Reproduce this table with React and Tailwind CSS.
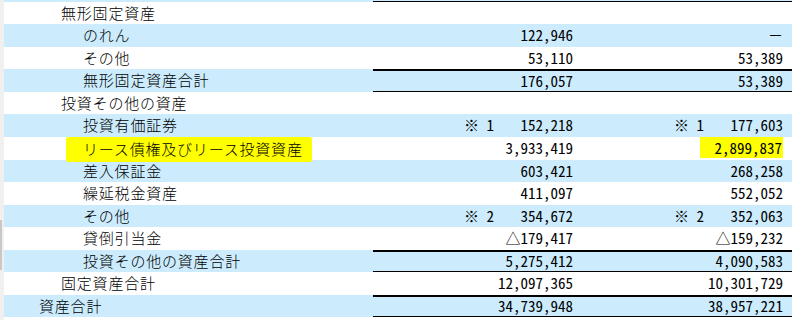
import React from "react";

const rows = [
  { label: "無形固定資産", level: 1, a: "", b: "", h: "h-[22px]" },
  { label: "のれん", level: 2, a: "122,946", b: "－", h: "h-[23px]" },
  { label: "その他", level: 2, a: "53,110", b: "53,389", h: "h-[22px]" },
  { label: "無形固定資産合計", level: 2, a: "176,057", b: "53,389", h: "h-[23px]", total: true },
  { label: "投資その他の資産", level: 1, a: "", b: "", h: "h-[22px]" },
  { label: "投資有価証券", level: 2, a: "152,218", b: "177,603", note: "※ 1", h: "h-[23px]" },
  { label: "リース債権及びリース投資資産", level: 2, a: "3,933,419", b: "2,899,837", h: "h-[23px]", mark: true },
  { label: "差入保証金", level: 2, a: "603,421", b: "268,258", h: "h-[22px]" },
  { label: "繰延税金資産", level: 2, a: "411,097", b: "552,052", h: "h-[23px]" },
  { label: "その他", level: 2, a: "354,672", b: "352,063", note: "※ 2", h: "h-[22px]" },
  { label: "貸倒引当金", level: 2, a: "△179,417", b: "△159,232", h: "h-[23px]" },
  { label: "投資その他の資産合計", level: 2, a: "5,275,412", b: "4,090,583", h: "h-[22px]", total: true },
  { label: "固定資産合計", level: 1, a: "12,097,365", b: "10,301,729", h: "h-[23px]" },
  { label: "資産合計", level: 0, a: "34,739,948", b: "38,957,221", h: "h-[22px]", total: true },
];

const indent = ["pl-[35px]", "pl-[57px]", "pl-[79px]"];
const mono = { fontFamily: '"Noto Sans Mono CJK JP", "DejaVu Sans Mono", monospace' };

function Amount({ value, note, mark }) {
  return (
    <div className="flex items-center justify-end pr-[9px] h-full" style={mono}>
      {note && <span className="mr-[1px] whitespace-pre">{note}</span>}
      <span
        className={`min-w-[78px] text-right ${mark ? "bg-[#ffff00] pl-[14px] pr-[1px] h-[21px] self-start leading-[21px]" : ""}`}
      >
        {value}
      </span>
    </div>
  );
}

export default function App() {
  return (
    <div
      className="w-[792px] h-[320px] flex bg-white text-black text-[15px] font-light overflow-hidden"
      style={{ fontFamily: '"Noto Sans CJK JP", sans-serif' }}
    >
      {/* left edge of the window */}
      <div className="w-[4px] bg-[#f0f0f0] flex flex-col">
        <div className="h-[220px]"></div>
        <div className="h-[50px] w-[2px] bg-[#c8c8c8]"></div>
      </div>

      <div className="flex-1 flex flex-col">
        <div className="flex h-[2px] bg-[#ccecfd]">
          <div className="w-[369px]"></div>
          <div className="flex-1 border-b border-black"></div>
        </div>

        {rows.map((r, i) => {
          const bg = i % 2 === 1 ? "bg-[#ccecfd]" : "bg-white";
          const line = r.total ? "border-t-2 border-b border-black" : "";
          return (
            <div key={i} className={`flex ${r.h} ${bg}`}>
              <div className={`w-[369px] flex items-center ${indent[r.level]} tracking-[0.8px]`}>
                {r.mark ? (
                  <span className="relative z-10 -ml-[17px] pl-[17px] pr-[9px] h-[25px] mt-[1px] flex items-center bg-[#ffff00] rounded-[2px]">
                    {r.label}
                  </span>
                ) : (
                  r.label
                )}
              </div>
              <div className={`w-[209px] ${line}`}>
                <Amount value={r.a} note={r.note} />
              </div>
              <div className={`flex-1 ${line}`}>
                <Amount value={r.b} note={r.note} mark={r.mark} />
              </div>
            </div>
          );
        })}
      </div>
    </div>
  );
}
